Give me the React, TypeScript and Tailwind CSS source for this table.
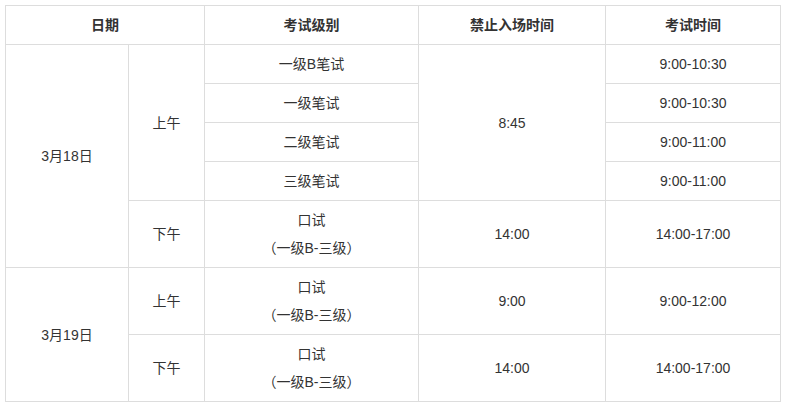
const td = "border border-[#dddddd] px-2 py-[5px] text-center align-middle";

function Oral() {
  return (
    <>
      <div>口试</div>
      <div>（一级B-三级）</div>
    </>
  );
}

export default function App() {
  return (
    <div className="min-h-screen bg-white p-[5px]">
      <table
        className="w-[775px] table-fixed border-collapse text-[14px] leading-[28px] text-[#333333]"
        style={{ fontFamily: '"Liberation Sans", "Noto Sans CJK SC", sans-serif' }}
      >
        <colgroup>
          <col className="w-[123px]" />
          <col className="w-[76px]" />
          <col className="w-[214px]" />
          <col className="w-[187px]" />
          <col className="w-[175px]" />
        </colgroup>
        <thead>
          <tr>
            <th colSpan={2} className={`${td} font-bold`}>日期</th>
            <th className={`${td} font-bold`}>考试级别</th>
            <th className={`${td} font-bold`}>禁止入场时间</th>
            <th className={`${td} font-bold`}>考试时间</th>
          </tr>
        </thead>
        <tbody>
          <tr>
            <td rowSpan={5} className={td}>3月18日</td>
            <td rowSpan={4} className={td}>上午</td>
            <td className={td}>一级B笔试</td>
            <td rowSpan={4} className={td}>8:45</td>
            <td className={td}>9:00-10:30</td>
          </tr>
          <tr>
            <td className={td}>一级笔试</td>
            <td className={td}>9:00-10:30</td>
          </tr>
          <tr>
            <td className={td}>二级笔试</td>
            <td className={td}>9:00-11:00</td>
          </tr>
          <tr>
            <td className={td}>三级笔试</td>
            <td className={td}>9:00-11:00</td>
          </tr>
          <tr>
            <td className={td}>下午</td>
            <td className={td}><Oral /></td>
            <td className={td}>14:00</td>
            <td className={td}>14:00-17:00</td>
          </tr>
          <tr>
            <td rowSpan={2} className={td}>3月19日</td>
            <td className={td}>上午</td>
            <td className={td}><Oral /></td>
            <td className={td}>9:00</td>
            <td className={td}>9:00-12:00</td>
          </tr>
          <tr>
            <td className={td}>下午</td>
            <td className={td}><Oral /></td>
            <td className={td}>14:00</td>
            <td className={td}>14:00-17:00</td>
          </tr>
        </tbody>
      </table>
    </div>
  );
}
